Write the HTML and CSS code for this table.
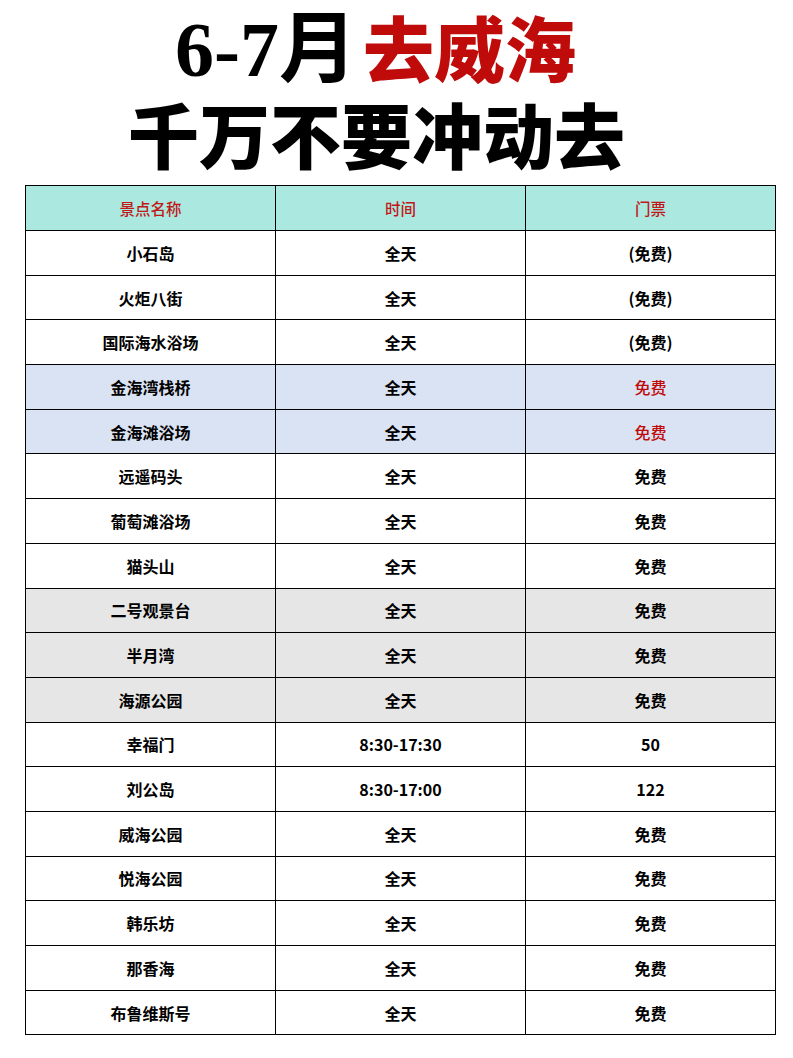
FILE: index.html
```html
<!DOCTYPE html>
<html lang="zh">
<head>
<meta charset="utf-8">
<link rel="stylesheet" href="styles.css">
</head>
<body>
<div class="page">
  <h1 class="title">
    <span class="line1"><span class="num">6-7月</span><span class="red">去威海</span></span>
    <span class="line2">千万不要冲动去</span>
  </h1>
  <table class="spots">
    <thead>
      <tr><th>景点名称</th><th>时间</th><th>门票</th></tr>
    </thead>
    <tbody>
      <tr><td>小石岛</td><td>全天</td><td>(免费)</td></tr>
      <tr><td>火炬八街</td><td>全天</td><td>(免费)</td></tr>
      <tr><td>国际海水浴场</td><td>全天</td><td>(免费)</td></tr>
      <tr class="blue"><td>金海湾栈桥</td><td>全天</td><td class="red-txt">免费</td></tr>
      <tr class="blue"><td>金海滩浴场</td><td>全天</td><td class="red-txt">免费</td></tr>
      <tr><td>远遥码头</td><td>全天</td><td>免费</td></tr>
      <tr><td>葡萄滩浴场</td><td>全天</td><td>免费</td></tr>
      <tr><td>猫头山</td><td>全天</td><td>免费</td></tr>
      <tr class="gray"><td>二号观景台</td><td>全天</td><td>免费</td></tr>
      <tr class="gray"><td>半月湾</td><td>全天</td><td>免费</td></tr>
      <tr class="gray"><td>海源公园</td><td>全天</td><td>免费</td></tr>
      <tr><td>幸福门</td><td>8:30-17:30</td><td>50</td></tr>
      <tr><td>刘公岛</td><td>8:30-17:00</td><td>122</td></tr>
      <tr><td>威海公园</td><td>全天</td><td>免费</td></tr>
      <tr><td>悦海公园</td><td>全天</td><td>免费</td></tr>
      <tr><td>韩乐坊</td><td>全天</td><td>免费</td></tr>
      <tr><td>那香海</td><td>全天</td><td>免费</td></tr>
      <tr><td>布鲁维斯号</td><td>全天</td><td>免费</td></tr>
    </tbody>
  </table>
</div>
</body>
</html>
```
FILE: styles.css
```css
html, body {
  margin: 0;
  padding: 0;
  background: #ffffff;
}
.page {
  width: 793px;
  height: 1058px;
  overflow: hidden;
  padding-top: 6px;
  box-sizing: border-box;
}
.title {
  margin: 0;
  display: flex;
  flex-direction: column;
  align-items: center;
  font-family: "Noto Sans CJK SC", sans-serif;
  font-weight: 900;
  color: #000;
}
.line1 {
  font-size: 71px;
  line-height: 78px;
  margin-left: -42px;
}
.num {
  font-family: "Liberation Serif", "Noto Sans CJK SC", serif;
  font-weight: 700;
  font-size: 78px;
  margin-right: 6px;
}
.red {
  color: #c00b0b;
}
.line2 {
  font-size: 71px;
  line-height: 86px;
  margin-left: -40px;
}
.spots {
  margin: 10px 0 0 25px;
  width: 751px;
  border-collapse: collapse;
  table-layout: fixed;
  font-family: "Noto Sans CJK SC", sans-serif;
  font-weight: 700;
  font-size: 16px;
  color: #000;
}
.spots th, .spots td {
  border: 1px solid #000;
  text-align: center;
  padding: 0;
  height: 43.7px;
}
.spots th {
  background: #abe8e0;
  color: #c01818;
  font-size: 15.5px;
  font-weight: 500;
  height: 44px;
}
.spots tr.blue td {
  background: #dae3f3;
}
.spots tr.gray td {
  background: #e7e6e6;
}
.spots td.red-txt {
  color: #c00b0b;
  font-weight: 500;
}
```
